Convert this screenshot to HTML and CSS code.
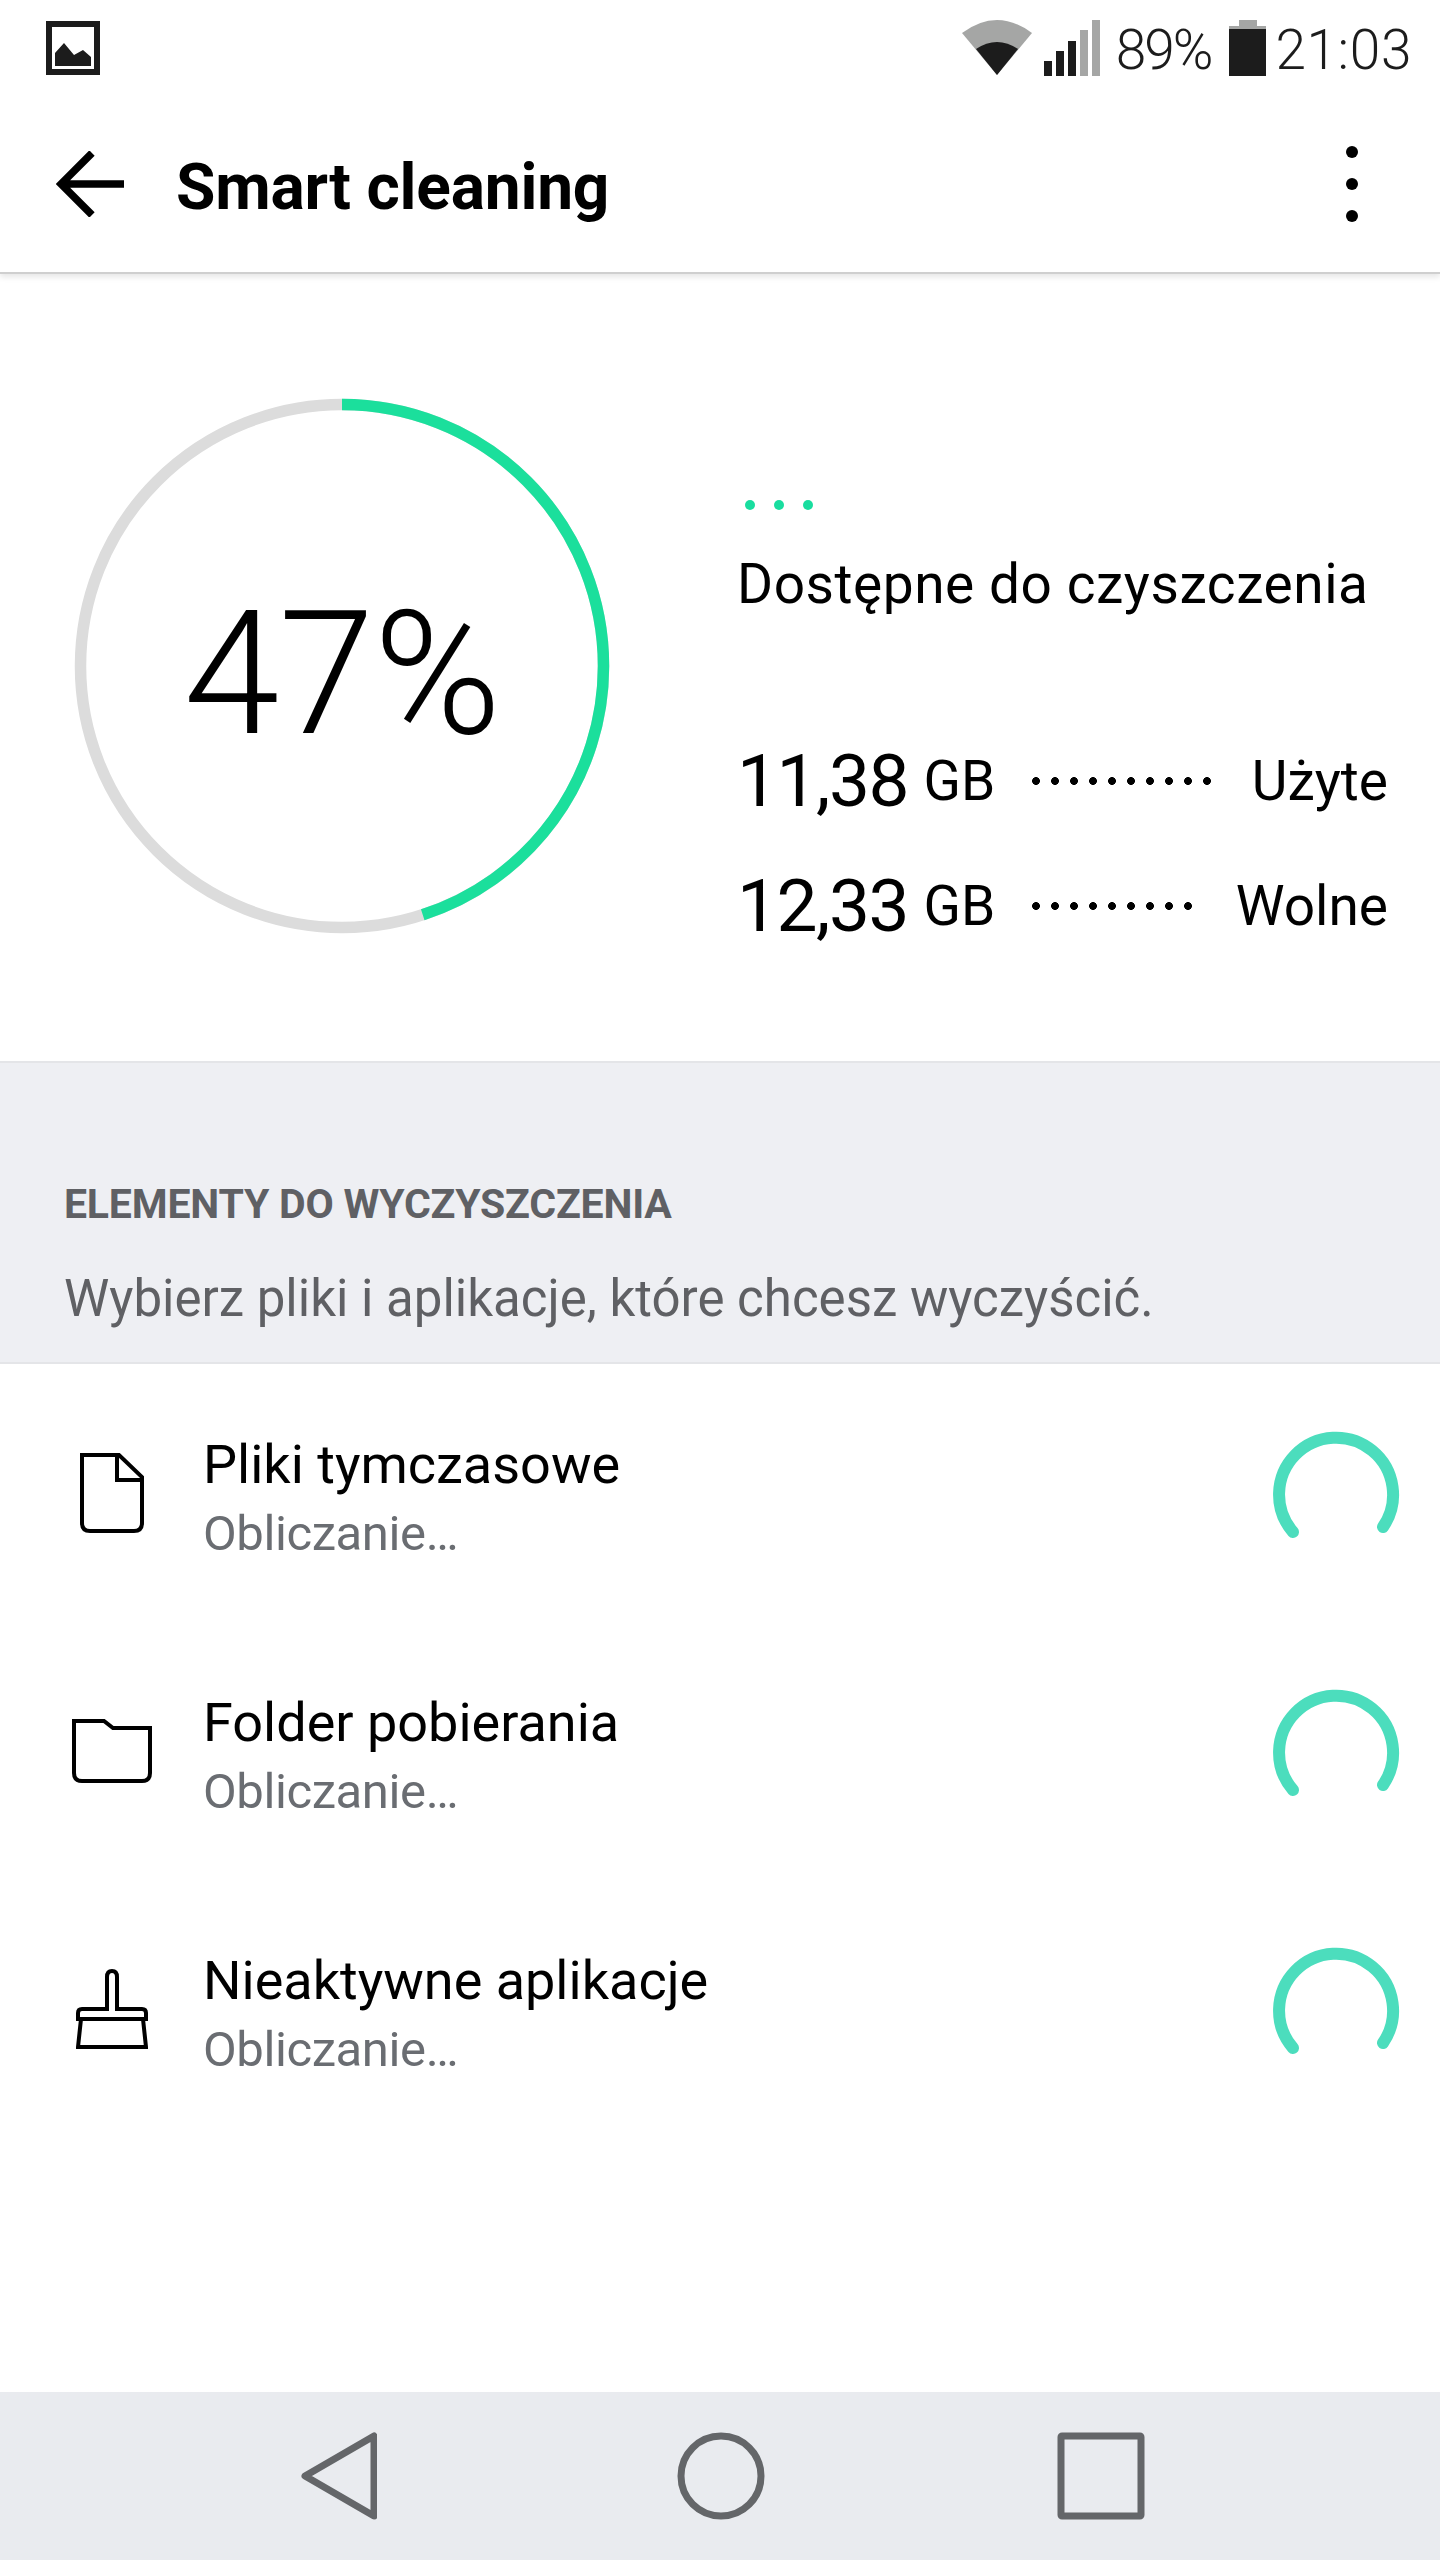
FILE: index.html
```html
<!DOCTYPE html>
<html lang="pl">
<head>
    <meta charset="UTF-8">
    <meta name="viewport" content="width=device-width, initial-scale=1.0">
    <title>Smart cleaning</title>
    <link rel="stylesheet" href="styles.css">
</head>
<body>
    <div class="screen">
        <header class="topbar">
            <div class="status">
                <svg class="notif" width="54" height="54" viewBox="0 0 54 54">
                    <rect x="3" y="3" width="48" height="48" fill="none" stroke="#1c1c1c" stroke-width="6"/>
                    <path d="M9 45V32L18 22L28 34L37 29L45 36V45Z" fill="#1c1c1c"/>
                </svg>
                <div class="status-right">
                    <svg class="wifi" width="70" height="56" viewBox="0 0 70 56">
                        <path d="M0 13Q35 -13 70 13L35 55Z" fill="#a5a6a5"/>
                        <path d="M14 29Q35 15 56 29L35 55Z" fill="#1c1c1c"/>
                    </svg>
                    <div class="signal">
                        <span class="bar bar-1"></span>
                        <span class="bar bar-2"></span>
                        <span class="bar bar-3"></span>
                        <span class="bar bar-4 off"></span>
                        <span class="bar bar-5 off"></span>
                    </div>
                    <span class="status-text pct">89%</span>
                    <div class="battery">
                        <span class="battery-nub"></span>
                        <span class="battery-top"></span>
                        <span class="battery-body"></span>
                    </div>
                    <span class="status-text clock">21:03</span>
                </div>
            </div>
            <div class="appbar">
                <svg class="back" width="68" height="66" viewBox="0 0 68 66">
                    <path d="M68 33H5M36 2L5 33L36 64" fill="none" stroke="#000" stroke-width="7.5"/>
                </svg>
                <h1>Smart cleaning</h1>
                <div class="menu">
                    <span></span>
                    <span></span>
                    <span></span>
                </div>
            </div>
        </header>

        <section class="hero">
            <div class="ring">
                <svg width="548" height="548" viewBox="0 0 548 548">
                    <circle cx="274" cy="274" r="261.5" fill="none" stroke="#dcdcdc" stroke-width="11.5"/>
                    <circle cx="274" cy="274" r="261.5" fill="none" stroke="#1bdf9c" stroke-width="11.5" pathLength="100" stroke-dasharray="45 100" transform="rotate(-90 274 274)"/>
                </svg>
                <span class="ring-value">47%</span>
            </div>
            <div class="storage">
                <div class="teal-dots">
                    <span></span>
                    <span></span>
                    <span></span>
                </div>
                <p class="storage-title">Dostępne do czyszczenia</p>
                <div class="storage-row first">
                    <span class="num">11,38</span>
                    <span class="unit">GB</span>
                    <span class="leader leader-10"></span>
                    <span class="label">Użyte</span>
                </div>
                <div class="storage-row">
                    <span class="num">12,33</span>
                    <span class="unit">GB</span>
                    <span class="leader leader-9"></span>
                    <span class="label">Wolne</span>
                </div>
            </div>
        </section>

        <section class="band">
            <h2>ELEMENTY DO WYCZYSZCZENIA</h2>
            <p>Wybierz pliki i aplikacje, które chcesz wyczyścić.</p>
        </section>

        <ul class="items">
            <li class="item">
                <div class="item-icon">
                    <svg width="64" height="80" viewBox="0 0 64 80">
                        <path d="M2 2H39L62 24V70Q62 78 54 78H10Q2 78 2 70Z M37 2V27H62" fill="none" stroke="#000" stroke-width="4"/>
                    </svg>
                </div>
                <div class="item-text">
                    <div class="item-title">Pliki tymczasowe</div>
                    <div class="item-sub">Obliczanie…</div>
                </div>
                <svg class="spinner" width="140" height="140" viewBox="0 0 140 140">
                    <path d="M27 108A57 57 0 1 1 117 103" fill="none" stroke="#4cddbd" stroke-width="12" stroke-linecap="round"/>
                </svg>
            </li>
            <li class="item">
                <div class="item-icon">
                    <svg width="80" height="64" viewBox="0 0 80 64">
                        <path d="M2 2H32L41 9H78V54Q78 62 70 62H10Q2 62 2 54Z" fill="none" stroke="#000" stroke-width="4"/>
                    </svg>
                </div>
                <div class="item-text">
                    <div class="item-title">Folder pobierania</div>
                    <div class="item-sub">Obliczanie…</div>
                </div>
                <svg class="spinner" width="140" height="140" viewBox="0 0 140 140">
                    <path d="M27 108A57 57 0 1 1 117 103" fill="none" stroke="#4cddbd" stroke-width="12" stroke-linecap="round"/>
                </svg>
            </li>
            <li class="item">
                <div class="item-icon">
                    <svg width="72" height="80" viewBox="0 0 72 80">
                        <path d="M31 40V8Q31 2 36 2Q41 2 41 8V40H66Q70 40 70 44V50H2V44Q2 40 6 40Z M5 50L2 78H70L67 50" fill="none" stroke="#000" stroke-width="4"/>
                    </svg>
                </div>
                <div class="item-text">
                    <div class="item-title">Nieaktywne aplikacje</div>
                    <div class="item-sub">Obliczanie…</div>
                </div>
                <svg class="spinner" width="140" height="140" viewBox="0 0 140 140">
                    <path d="M27 108A57 57 0 1 1 117 103" fill="none" stroke="#4cddbd" stroke-width="12" stroke-linecap="round"/>
                </svg>
            </li>
        </ul>

        <nav class="navbar">
            <svg width="76" height="88" viewBox="0 0 76 88">
                <path d="M73 4V84L4 44Z" fill="none" stroke="#646669" stroke-width="7" stroke-linejoin="round"/>
            </svg>
            <svg class="nav-home" width="88" height="88" viewBox="0 0 88 88">
                <circle cx="44" cy="44" r="40" fill="none" stroke="#646669" stroke-width="7"/>
            </svg>
            <svg class="nav-recent" width="88" height="88" viewBox="0 0 88 88">
                <rect x="4" y="4" width="80" height="80" rx="1" fill="none" stroke="#646669" stroke-width="7"/>
            </svg>
        </nav>
    </div>
</body>
</html>
```

FILE: styles.css
```css
* {
    box-sizing: border-box;
}
body {
    margin: 0;
    background-color: #fff;
    color: #000;
    font-family: Roboto, sans-serif;
}
.screen {
    width: 1440px;
    height: 2560px;
    display: flex;
    flex-direction: column;
}

/* status bar + app bar */
.topbar {
    height: 274px;
    flex: none;
    border-bottom: 2px solid #cfcfcf;
    box-shadow: 0 3px 6px rgba(0, 0, 0, 0.1);
    display: flex;
    flex-direction: column;
}
.status {
    height: 96px;
    padding: 20px 28px 0 46px;
    display: flex;
    justify-content: space-between;
    align-items: flex-start;
}
.notif {
    margin-top: 1px;
}
.status-right {
    display: flex;
    align-items: flex-start;
}
.wifi {
    margin-right: 12px;
}
.signal {
    width: 57px;
    height: 56px;
    display: flex;
    align-items: flex-end;
    gap: 4px;
    margin-right: 15px;
}
.bar {
    width: 8px;
    background-color: #1c1c1c;
}
.bar.off {
    background-color: #a5a6a5;
}
.bar-1 { height: 15px; }
.bar-2 { height: 25px; }
.bar-3 { height: 35px; }
.bar-4 { height: 46px; }
.bar-5 { height: 56px; }
.status-text {
    margin-top: 2px;
    font-size: 55px;
    font-weight: 300;
    line-height: 56px;
    color: #1c1c1c;
}
.pct {
    letter-spacing: -2px;
}
.clock {
    letter-spacing: 0.6px;
}
.battery {
    width: 37px;
    height: 56px;
    margin: 0 9px 0 18px;
    display: flex;
    flex-direction: column;
    align-items: center;
}
.battery-nub {
    width: 18px;
    height: 6px;
    background-color: #a5a6a5;
}
.battery-top {
    width: 37px;
    height: 3px;
    background-color: #a5a6a5;
}
.battery-body {
    width: 37px;
    height: 47px;
    background-color: #1c1c1c;
}
.appbar {
    flex: 1;
    display: flex;
    align-items: center;
    padding: 0 82px 0 56px;
}
h1 {
    margin: 0 0 0 52px;
    padding-top: 6px;
    font-size: 64px;
    font-weight: 700;
    letter-spacing: -0.2px;
    flex: 1;
}
.menu {
    display: flex;
    flex-direction: column;
    gap: 20px;
}
.menu span {
    width: 12px;
    height: 12px;
    border-radius: 50%;
    background-color: #000;
}

/* circle + storage numbers */
.hero {
    height: 787px;
    flex: none;
    display: flex;
    align-items: center;
    padding: 0 52px 3px 68px;
}
.ring {
    width: 548px;
    height: 548px;
    position: relative;
    flex: none;
}
.ring-value {
    position: absolute;
    inset: 0;
    padding-top: 15px;
    display: flex;
    align-items: center;
    justify-content: center;
    font-size: 173px;
    font-weight: 300;
    letter-spacing: -1px;
}
.storage {
    margin: 226px 0 0 121px;
    flex: 1;
    align-self: flex-start;
}
.teal-dots {
    display: flex;
    gap: 19px;
    padding-left: 8px;
}
.teal-dots span {
    width: 10px;
    height: 10px;
    border-radius: 50%;
    background-color: #19dd9f;
}
.storage-title {
    margin: 42px 0 0;
    font-size: 55px;
    line-height: 64px;
    letter-spacing: 0.55px;
}
.storage-row {
    display: flex;
    align-items: center;
    height: 125px;
}
.storage-row.first {
    margin-top: 102px;
}
.num {
    font-size: 73px;
    letter-spacing: -1.5px;
}
.unit {
    margin-left: 15.5px;
    font-size: 55px;
}
.leader {
    height: 8px;
    margin-left: 37px;
    background-image: radial-gradient(circle at 4px 4px, #000 3.6px, transparent 4.2px);
    background-size: 19px 8px;
    background-repeat: repeat-x;
}
.leader-10 { width: 179px; }
.leader-9 { width: 160px; }
.label {
    margin-left: auto;
    font-size: 55px;
}

/* section heading */
.band {
    height: 303px;
    flex: none;
    padding: 116px 0 0 64px;
    background-color: #eeeff3;
    border-top: 2px solid #e4e5e8;
    border-bottom: 2px solid #e4e5e8;
    color: #5f6064;
}
h2 {
    margin: 0;
    font-size: 41px;
    font-weight: 700;
    line-height: 50px;
    letter-spacing: -0.2px;
}
.band p {
    margin: 41px 0 0;
    font-size: 51px;
    line-height: 58px;
}

/* list */
.items {
    list-style: none;
    margin: 0;
    padding: 0;
    flex: 1;
}
.item {
    height: 258px;
    display: flex;
    align-items: center;
    padding-left: 72px;
}
.item-icon {
    width: 80px;
    margin-right: 51px;
    display: flex;
    justify-content: center;
    flex: none;
}
.item-text {
    flex: 1;
    padding-top: 16px;
}
.item-title {
    font-size: 54px;
    line-height: 64px;
}
.item-sub {
    font-size: 49px;
    line-height: 73px;
    letter-spacing: -0.4px;
    color: #6a6d72;
}
.spinner {
    margin: 2px 34px 0 0;
}

/* bottom nav */
.navbar {
    height: 168px;
    flex: none;
    background-color: #e9ebef;
    display: flex;
    align-items: center;
    padding-left: 301px;
}
.nav-home {
    margin-left: 300px;
}
.nav-recent {
    margin-left: 292px;
}
```
